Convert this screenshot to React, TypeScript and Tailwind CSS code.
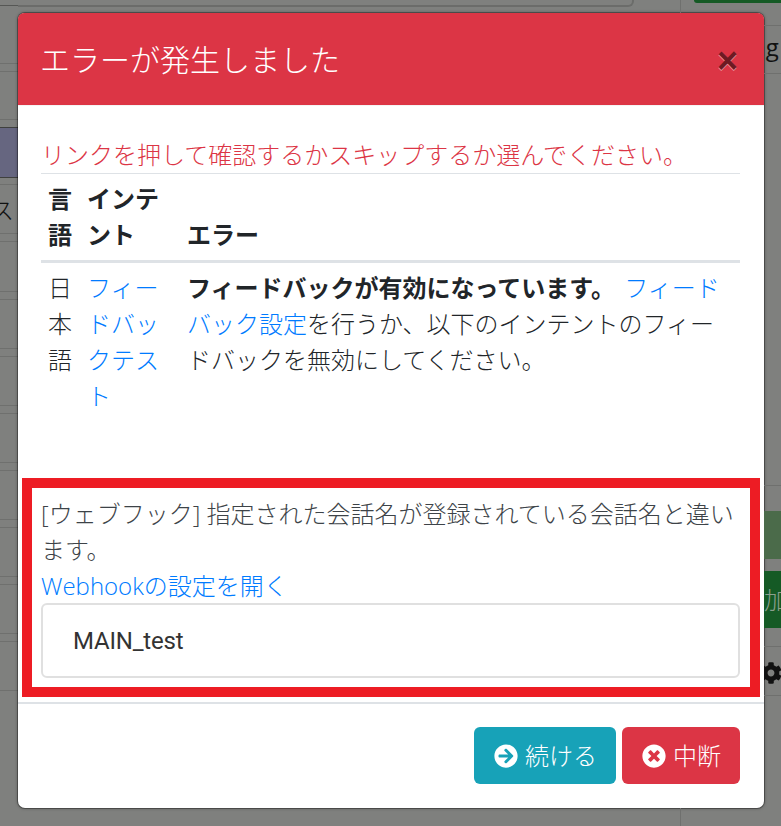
import { FaArrowCircleRight, FaTimesCircle, FaCog } from "react-icons/fa";

const leftRows = [
  "h-[6px] border-[#565755]",
  "h-[58px] border-[#6f706e]",
  "h-[8px] border-[#6f706e]",
  "h-[48px] border-[#6f706e]",
  "h-[8px] border-[#3f403e]",
  "h-[50px] border-[#3f403e] bg-[#666680]",
  "h-[7px] border-[#6f706e]",
  "h-[49px] border-[#6f706e]",
  "h-[8px] border-[#6f706e]",
  "h-[50px] border-[#6f706e]",
  "h-[8px] border-[#6f706e]",
  "h-[49px] border-[#6f706e]",
  "h-[8px] border-[#6f706e]",
  "h-[49px] border-[#6f706e]",
  "h-[8px] border-[#6f706e]",
  "h-[49px] border-[#6f706e]",
  "h-[8px] border-[#6f706e]",
  "h-[49px] border-[#6f706e]",
  "h-[8px] border-[#6f706e]",
  "h-[49px] border-[#6f706e]",
  "h-[8px] border-[#6f706e]",
  "h-[49px] border-[#6f706e]",
  "h-[8px] border-[#6f706e]",
  "h-[49px] border-[#6f706e]",
];

function LeftStrip() {
  return (
    <div className="w-[18px] shrink-0 overflow-hidden">
      {leftRows.map((c, i) => (
        <div key={i} className={`border-b overflow-hidden ${c}`}>
          {i === 7 ? (
            <span className="block ml-[-10px] mt-[7px] w-[24px] text-[24px] leading-[36px] text-[#111]">ス</span>
          ) : null}
        </div>
      ))}
    </div>
  );
}

function RightStrip() {
  return (
    <div className="w-[17px] shrink-0 overflow-hidden">
      <div className="h-[26px] border-b border-[#6f706e]">
        <div className="h-[3px] bg-[#155a25]" />
      </div>
      <div className="h-[48px] border-b border-[#6f706e] overflow-hidden">
        <div className="ml-[-13px] mt-[3px] whitespace-nowrap text-[24px] leading-[36px] font-normal text-[#111]">ng</div>
      </div>
      <div className="h-[412px] border-b border-[#6f706e]" />
      <div className="h-[25px]" />
      <div className="h-[48px] bg-[#4b6b4a]" />
      <div className="h-[12px]" />
      <div className="h-[57px] overflow-hidden bg-[#155a25] text-[24px] leading-[57px] whitespace-nowrap text-[#8c9f8e]">加</div>
      <div className="h-[19px] border-b border-[#6f706e]" />
      <div className="h-[49px] border-b border-[#6f706e] overflow-hidden">
        <FaCog className="ml-[-4px] mt-[15px] w-[22px] h-[22px] text-[#111]" />
      </div>
    </div>
  );
}

export default function App() {
  return (
    <div className="flex h-[826px] w-[781px] overflow-hidden bg-[#7f807e] text-[24px] leading-[36px] font-light text-[#212529] [font-family:'Open_Sans','Noto_Sans_CJK_JP',sans-serif]">
      <LeftStrip />
      <div className="w-[746px] shrink-0">
        <div className="flex h-[13px]">
          <div className="h-[7px] w-[616px] rounded-br-[6px] border-r-2 border-b-2 border-[#6b6c6a]" />
          <div className="ml-[46px] h-full w-[14px] border-l border-[#6f706e]" />
          <div className="h-[3px] flex-1 rounded-bl-[4px] bg-[#155a25]" />
        </div>
        <div className="h-[795px] rounded-[7px] bg-white shadow-[0_0_0_1px_rgba(0,0,0,0.3),0_0_3px_1px_rgba(0,0,0,0.25)]">
          <div className="flex h-[93px] items-center justify-between rounded-t-[6px] border-b border-[#f4f4f4] bg-[#dc3545] pr-[26px] pl-[22px]">
            <h5 className="text-[30px] leading-[45px] font-light text-white">エラーが発生しました</h5>
            <span className="mt-[3px] text-[36px] leading-none font-bold text-black opacity-50 [font-family:'Liberation_Sans',sans-serif] [text-shadow:0_1px_0_#fff]">×</span>
          </div>
          <div className="px-[23px] pt-[31px]">
            <p className="text-[#dc3545]">リンクを押して確認するかスキップするか選んでください。</p>
            <table className="w-[699px] table-fixed border-separate border-spacing-0">
              <colgroup>
                <col className="w-[39px]" />
                <col className="w-[100px]" />
                <col className="w-[560px]" />
              </colgroup>
              <thead>
                <tr>
                  <th className="border-t border-b-[3px] border-[#dee2e6] px-[7px] py-[7px] text-left align-bottom font-bold">言語</th>
                  <th className="border-t border-b-[3px] border-[#dee2e6] px-[7px] py-[7px] text-left align-bottom font-bold">インテント</th>
                  <th className="border-t border-b-[3px] border-[#dee2e6] px-[7px] py-[7px] text-left align-bottom font-bold">エラー</th>
                </tr>
              </thead>
              <tbody>
                <tr>
                  <td className="px-[7px] py-[7px] align-top">日本語</td>
                  <td className="px-[7px] py-[7px] align-top text-[#007bff]">フィードバックテスト</td>
                  <td className="px-[7px] py-[7px] align-top">
                    <b className="font-bold">フィードバックが有効になっています。</b>{" "}
                    <span className="ml-[3px] text-[#007bff]">フィードバック設定</span>を行うか、以下のインテントのフィードバックを無効にしてください。
                  </td>
                </tr>
              </tbody>
            </table>
          </div>
          <div className="mx-[4px] mt-[57px] h-[219px] border-[10px] border-[#ed1c24] px-[9px] pt-[8px] text-[#3d4348]">
            <div>[ウェブフック] 指定された会話名が登録されている会話名と違います。</div>
            <div className="text-[#007bff]">Webhookの設定を開く</div>
            <input
              readOnly
              value="MAIN_test"
              className="mt-[-1px] block h-[75px] w-[699px] rounded-[6px] border-2 border-[#e0e0e0] bg-white pl-[30px] font-normal tracking-[-0.2px] text-[#333] outline-none [font-family:'Roboto',sans-serif]"
            />
          </div>
          <div className="mt-[5px] flex justify-end gap-[6px] border-t-2 border-[#dee2e6] px-[24px] pt-[23px]">
            <button className="flex h-[57px] w-[142px] items-center gap-[7px] rounded-[6px] bg-[#17a2b8] pl-[20px] text-white">
              <FaArrowCircleRight className="h-[24px] w-[24px]" />
              続ける
            </button>
            <button className="flex h-[57px] w-[118px] items-center gap-[7px] rounded-[6px] bg-[#dc3545] pl-[20px] text-white">
              <FaTimesCircle className="h-[24px] w-[24px]" />
              中断
            </button>
          </div>
        </div>
        <div className="flex h-[18px]">
          <div className="ml-[662px] h-full w-px bg-[#6f706e]" />
        </div>
      </div>
      <RightStrip />
    </div>
  );
}
